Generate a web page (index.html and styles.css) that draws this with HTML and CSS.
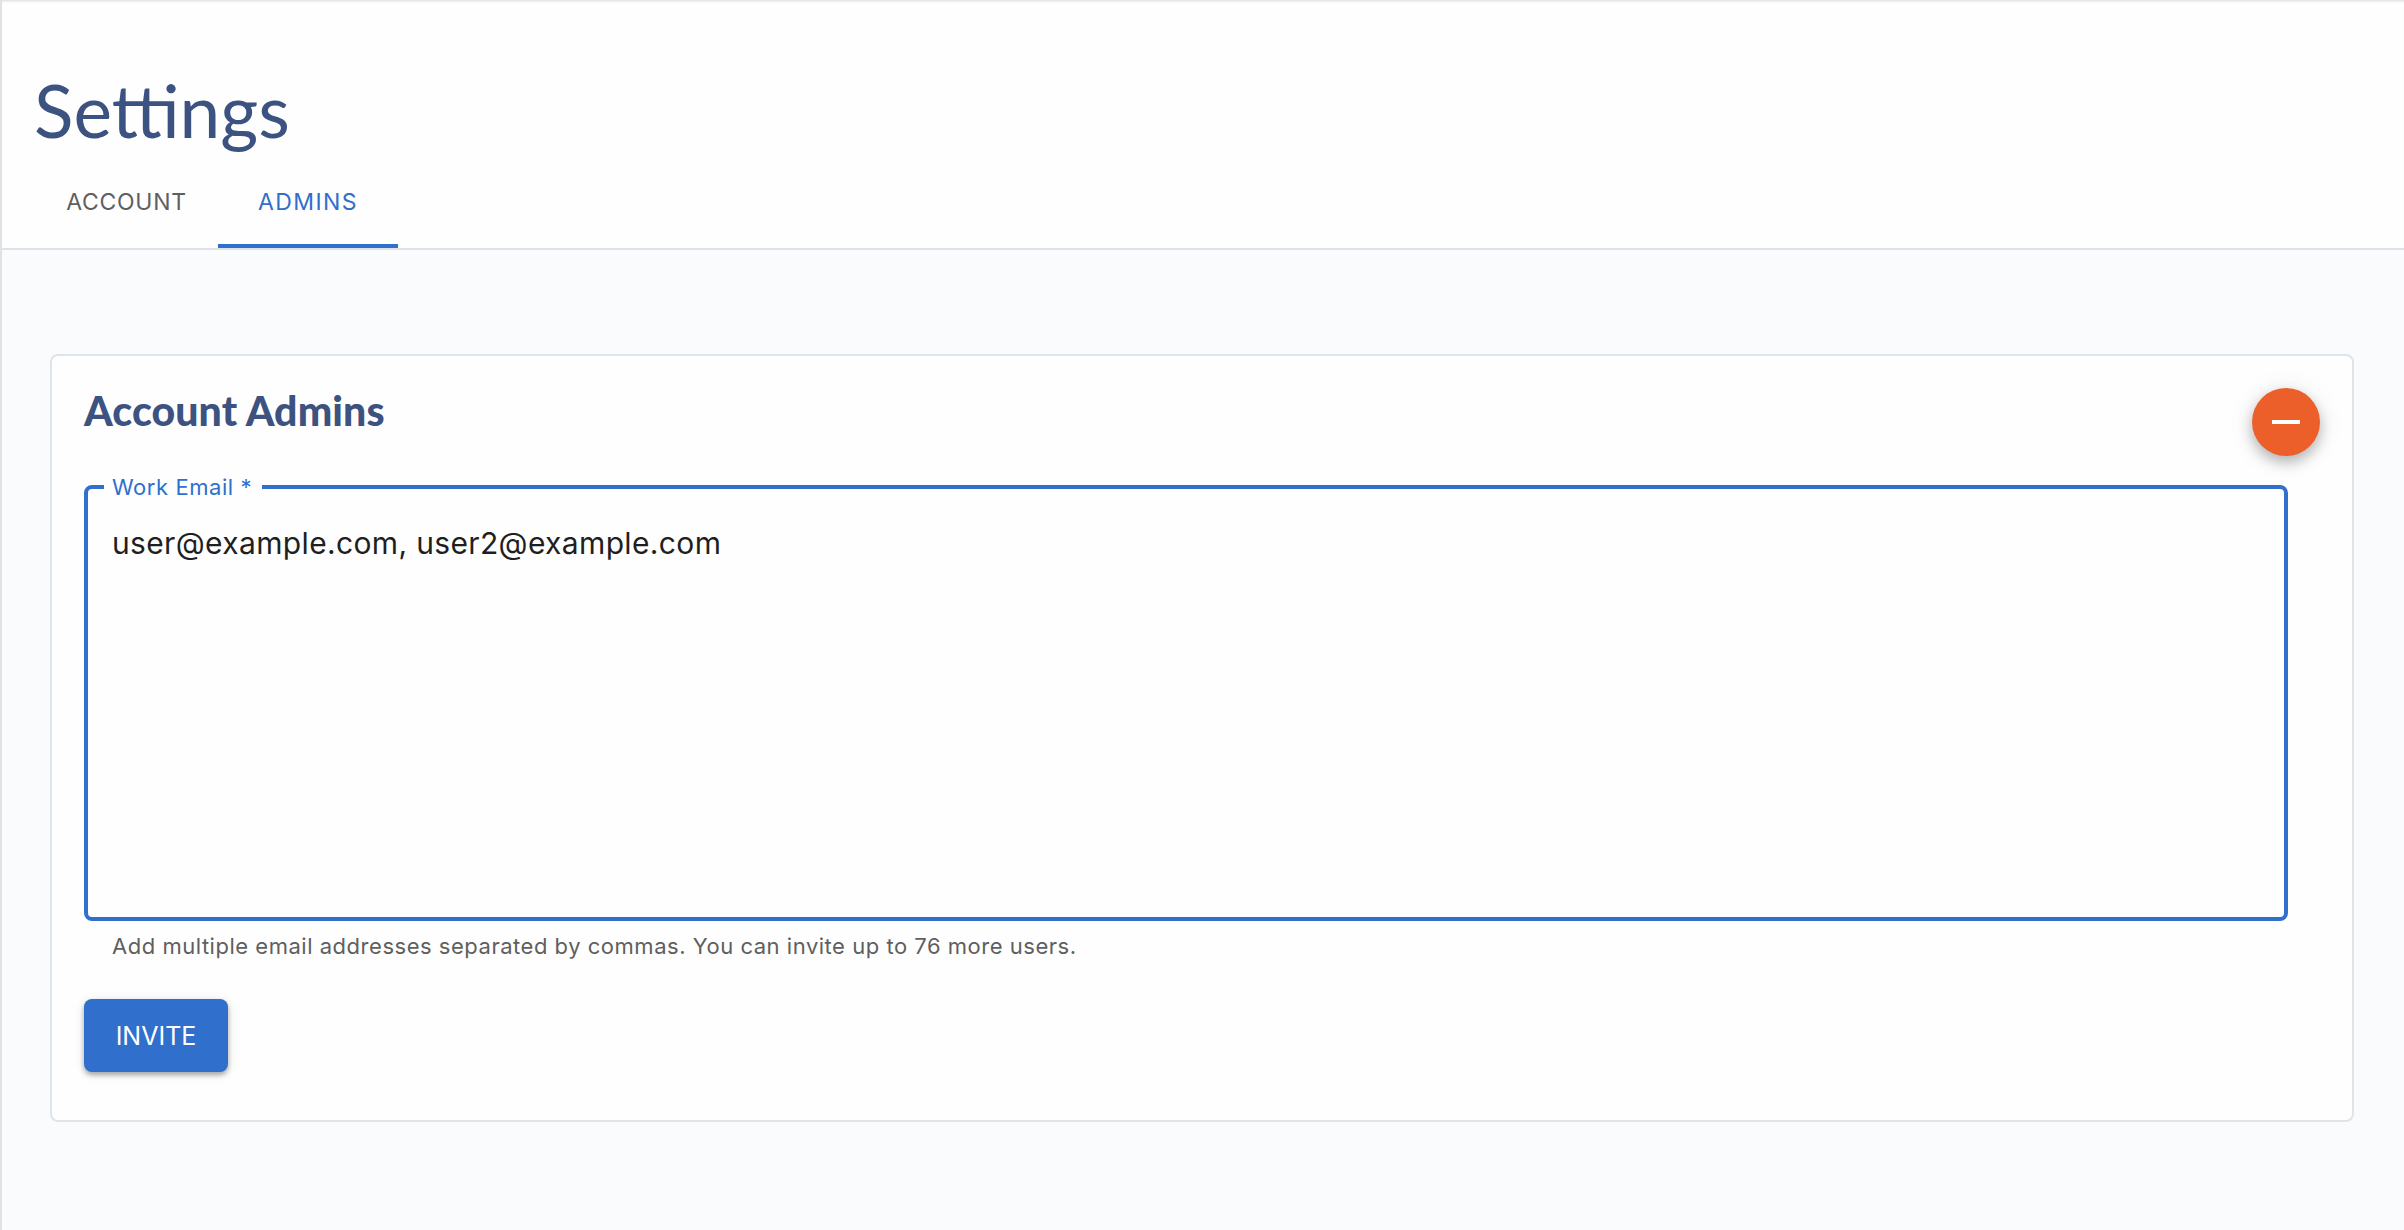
FILE: index.html
```html
<!DOCTYPE html>
<html lang="en">
<head>
<meta charset="utf-8">
<title>Settings</title>
<link rel="stylesheet" href="styles.css">
</head>
<body>
<div class="app">
  <header class="header">
    <h1 class="title">Settings</h1>
    <nav class="tabs">
      <a class="tab">ACCOUNT</a>
      <a class="tab tab-active">ADMINS</a>
    </nav>
  </header>
  <main class="content">
    <section class="card">
      <h2 class="card-title">Account Admins</h2>
      <button class="fab" aria-label="Collapse"><span class="fab-minus"></span></button>
      <fieldset class="field">
        <legend class="field-label">Work Email *</legend>
        <div class="field-value">user@example.com, user2@example.com</div>
      </fieldset>
      <p class="helper">Add multiple email addresses separated by commas. You can invite up to 76 more users.</p>
      <button class="invite">INVITE</button>
    </section>
  </main>
</div>
</body>
</html>
```
FILE: styles.css
```css
* { box-sizing: border-box; }
html, body { margin: 0; height: 100%; }
body { font-family: "Inter", "Liberation Sans", sans-serif; background: #fafbfd; overflow: hidden; }
.app { height: 1230px; border-left: 2px solid #dfe1e6; display: flex; flex-direction: column; }
.header { height: 250px; flex: none; padding-top: 68px; border-bottom: 2px solid #dde2e9; background-color: #fefefe; box-shadow: inset 0 3px 3px -2px #d8d8d8; display: flex; flex-direction: column; }
.title { margin: 0 0 0 32px; font: 400 73px/84px "Lato", sans-serif; color: #3c5280; height: 84px; }
.tabs { display: flex; padding-left: 36px; height: 94px; margin-top: auto; }
.tab { display: flex; align-items: center; justify-content: center; height: 94px; padding: 5px 3px 0 0; font-size: 23px; letter-spacing: 0.7px; color: #5f5f5f; width: 180px; border-bottom: 4px solid transparent; }
.tab-active { padding-right: 0; color: #306fcc; border-bottom-color: #306fcc; letter-spacing: 1.4px; }
.content { flex: 1; padding: 104px 50px 0 48px; }
.card { position: relative; height: 768px; background: #fefefe; border: 2px solid #dfe3ea; border-radius: 8px; padding: 32px; }
.card-title { margin: 0; font: 900 41px/46px "Lato", sans-serif; letter-spacing: 0.1px; color: #3c5280; }
.fab { position: absolute; top: 32px; right: 32px; width: 68px; height: 68px; padding: 0; border: 0; border-radius: 50%; background: #ec5f2a; display: flex; align-items: center; justify-content: center; box-shadow: 0 6px 14px rgba(0,0,0,.28), 0 2px 30px rgba(0,0,0,.07); }
.fab-minus { width: 28px; height: 4px; background: #fff; }
.field { margin: 41px 0 0; width: 2204px; height: 446px; padding: 0 24px; border: 4px solid #306fcc; border-radius: 8px; }
.field-label { margin-left: -8px; padding: 0 10px 0 8px; font-size: 22px; line-height: 24px; letter-spacing: 0.55px; color: #306fcc; }
.field-value { margin-top: 24px; font-size: 30px; line-height: 40px; letter-spacing: 0.35px; color: #1f1f1f; }
.helper { margin: 10px 0 0 28px; font-size: 22px; line-height: 30px; color: #5f5f5f; letter-spacing: 0.52px; }
.invite { display: block; margin-top: 38px; width: 144px; height: 73px; padding: 0; border: 0; border-radius: 8px; background: #306fcc; color: #fff; font-family: inherit; font-size: 25px; box-shadow: 0 3px 5px rgba(0,0,0,.3), 0 2px 12px rgba(0,0,0,.1); }
```
